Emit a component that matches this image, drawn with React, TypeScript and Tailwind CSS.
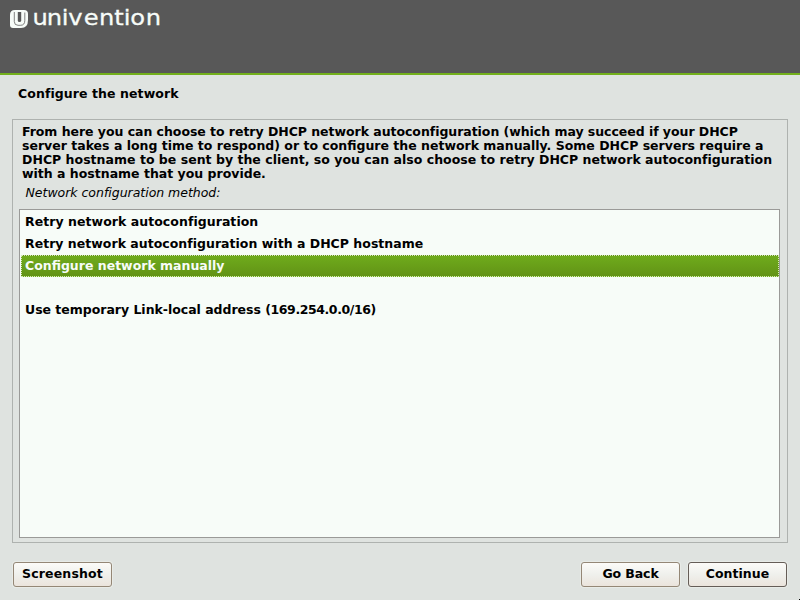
type Segment = { text: string; spacing: string };

const options: { parts: Segment[]; selected?: boolean }[] = [
  { parts: [{ text: 'Retry network autoconfiguration', spacing: 'tracking-[0.05px]' }] },
  { parts: [{ text: 'Retry network autoconfiguration with a DHCP hostname', spacing: 'tracking-[0.02px]' }] },
  { parts: [{ text: 'Configure network manually', spacing: 'tracking-[0px]' }], selected: true },
  { parts: [] },
  {
    parts: [
      { text: 'Use temporary Link-local address ', spacing: 'tracking-[-0.02px]' },
      { text: '(169.254.0.0/16)', spacing: 'tracking-[-0.42px]' },
    ],
  },
];

const description: Segment[] = [
  { text: 'From here you can choose to retry DHCP network autoconfiguration (which may succeed if your DHCP', spacing: 'tracking-[-0.04px]' },
  { text: 'server takes a long time to respond) or to configure the network manually. Some DHCP servers require a', spacing: 'tracking-[0px]' },
  { text: 'DHCP hostname to be sent by the client, so you can also choose to retry DHCP network autoconfiguration', spacing: 'tracking-[0.02px]' },
  { text: 'with a hostname that you provide.', spacing: 'tracking-[0px]' },
];

function Logo() {
  return (
    <svg width="170" height="32" viewBox="0 0 170 32" className="block" aria-label="univention">
      <path d="M15 10H24Q28 10 28 14V20Q28 28 21 28H13Q10 28 10 25V15Q10 10 15 10Z" fill="#f7fcf8" />
      <path d="M14.3 12V21.5Q14.3 25.3 18 25.3H20.5Q24.8 25.3 24.8 20.5V12.5" fill="none" stroke="#585858" strokeOpacity="0.75" strokeWidth="1" />
      <path d="M17.8 12H21.2V20.5Q21.2 22 19.5 22T17.8 20.5Z" fill="#585858" />
      <text
        transform="scale(1.1 1)"
        x="29.5 42.6 56.2 62.1 76.2 89.9 103.9 112.5 118.4 132.5"
        y="25.5"
        fill="#f7fcf8"
        stroke="#f7fcf8"
        strokeWidth="0.3"
        fontSize="22"
        fontFamily="'DejaVu Sans', sans-serif"
      >
        univention
      </text>
    </svg>
  );
}

function Button({ label, border, spacing }: { label: string; border: string; spacing: string }) {
  return (
    <button className={`h-[25px] w-[99px] rounded-[3px] border bg-linear-to-b from-[#fcfbf8] via-[#eff0ec] to-[#ebe4dc] pb-px text-center leading-[22px] font-bold shadow-[0_0_0_1px_#e8ebe7] ${border} ${spacing}`}>
      {label}
    </button>
  );
}

export default function App() {
  return (
    <div className="relative flex h-[600px] w-[800px] flex-col overflow-hidden bg-[#dfe3e0] font-['DejaVu_Sans',sans-serif] text-[12.5px] leading-[14px] text-black">
      <header className="h-[75px] shrink-0 border-b-2 border-[#73b01c] bg-[#585858]">
        <Logo />
      </header>
      <h1 className="mt-3 ml-[18px] h-[32px] font-bold tracking-[0.08px] whitespace-nowrap">Configure the network</h1>
      <main className="mx-3 flex h-[424px] flex-col border border-[#aeb2af] pt-[5px] pr-[7px] pb-1 pl-[6px]">
        <div className="ml-[3px] font-bold">
          {description.map((line) => (
            <p key={line.text} className={`whitespace-nowrap ${line.spacing}`}>{line.text}</p>
          ))}
        </div>
        <p className="mt-[5px] ml-[6.5px] tracking-[-0.02px] whitespace-nowrap italic">Network configuration method:</p>
        <ul className="mt-[9px] h-[329px] border border-[#9a9a98] bg-[#f7fcf8] py-px pl-px">
          {options.map((option, i) => (
            <li key={i} className={`h-[22px] border border-dotted pt-[3px] pl-[3px] font-bold whitespace-pre ${option.selected ? 'border-[#d5e9b5] bg-linear-to-b from-[#6fab1c] to-[#629316] text-[#f7fcf8]' : 'border-transparent'}`}>
              {option.parts.map((part) => (
                <span key={part.text} className={part.spacing}>{part.text}</span>
              ))}
            </li>
          ))}
        </ul>
      </main>
      <footer className="mt-[19px] flex px-[13px]">
        <Button label="Screenshot" border="border-[#948776]" spacing="tracking-[0.17px]" />
        <div className="ml-auto flex gap-2">
          <Button label="Go Back" border="border-[#948776]" spacing="tracking-[-0.1px]" />
          <Button label="Continue" border="border-[#655d57]" spacing="tracking-[0.05px]" />
        </div>
      </footer>
      <div className="absolute right-0 bottom-0 size-px bg-black" />
    </div>
  );
}
